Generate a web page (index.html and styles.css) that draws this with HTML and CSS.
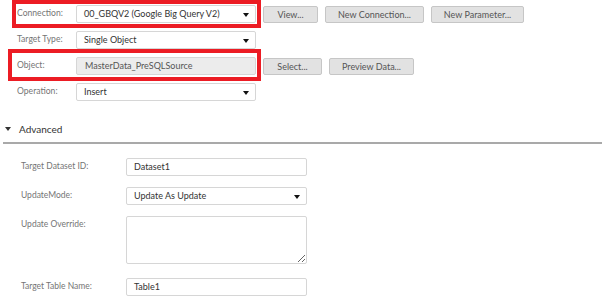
FILE: index.html
```html
<!DOCTYPE html>
<html>
<head>
<meta charset="utf-8">
<link rel="stylesheet" href="styles.css">
</head>
<body>
<div class="page">
  <div class="main">
    <div class="row">
      <span class="lbl">Connection:</span>
      <div class="field sel">00_GBQV2 (Google Big Query V2)<span class="caret"></span></div>
      <div class="btns">
        <span class="btn w-view">View...</span>
        <span class="btn w-newconn">New Connection...</span>
        <span class="btn w-newparam">New Parameter...</span>
      </div>
    </div>
    <div class="row">
      <span class="lbl">Target Type:</span>
      <div class="field sel">Single Object<span class="caret"></span></div>
    </div>
    <div class="row">
      <span class="lbl">Object:</span>
      <div class="field ro">MasterData_PreSQLSource</div>
      <div class="btns">
        <span class="btn w-select">Select...</span>
        <span class="btn w-preview">Preview Data...</span>
      </div>
    </div>
    <div class="row">
      <span class="lbl">Operation:</span>
      <div class="field sel">Insert<span class="caret"></span></div>
    </div>
  </div>

  <div class="adv-head"><span class="tri"></span><span class="adv-title">Advanced</span></div>
  <div class="rule"></div>

  <div class="adv">
    <div class="arow">
      <span class="albl">Target Dataset ID:</span>
      <div class="afield">Dataset1</div>
    </div>
    <div class="arow">
      <span class="albl">UpdateMode:</span>
      <div class="afield sel">Update As Update<span class="caret"></span></div>
    </div>
    <div class="arow">
      <span class="albl">Update Override:</span>
      <textarea class="area"></textarea>
    </div>
    <div class="arow last">
      <span class="albl">Target Table Name:</span>
      <div class="afield">Table1</div>
    </div>
  </div>

  <div class="hl hl-conn"></div>
  <div class="hl hl-obj"></div>
</div>
</body>
</html>
```

FILE: styles.css
```css
* { box-sizing: border-box; }
html, body { margin: 0; padding: 0; background: #fff; }
body {
  font-family: Lato, "Open Sans", "Liberation Sans", sans-serif;
  font-size: 9px;
  color: #333;
  width: 602px;
  height: 300px;
  overflow: hidden;
}
.page { position: relative; width: 602px; height: 300px; }

.main { padding-top: 5px; display: flex; flex-direction: column; gap: 8px; }
.row { display: flex; align-items: flex-start; height: 18px; }
.lbl {
  width: 76px;
  padding-left: 17px;
  color: #757575;
  font-size: 8.6px;
  line-height: 12px;
  padding-top: 2px;
}
.field {
  position: relative;
  width: 180px;
  height: 18px;
  border: 1px solid #d6d6d6;
  border-radius: 2px;
  padding-left: 7px;
  line-height: 16px;
  color: #333;
  background: #fff;
}
.field.ro { background: #ececec; color: #555; padding-left: 8px; }
.caret {
  position: absolute;
  right: 6px;
  top: 7px;
  width: 0; height: 0;
  border-left: 3.5px solid transparent;
  border-right: 3.5px solid transparent;
  border-top: 4px solid #111;
}
.btns { display: flex; gap: 7px; margin-left: 7px; margin-top: 1px; }
.btn {
  height: 17px;
  line-height: 15px;
  border: 1px solid #c6c6c6;
  border-radius: 2px;
  background-color: #e2e2e2;
  background-image: radial-gradient(#cfcfcf 0.6px, transparent 0.7px);
  background-size: 4px 4px;
  color: #555;
  text-align: center;
}
.w-view { width: 55px; }
.w-newconn { width: 99px; }
.w-newparam { width: 93px; }
.w-select { width: 59px; }
.w-preview { width: 85px; }

.adv-head {
  margin-top: 18px;
  height: 20px;
  display: flex;
  align-items: center;
  padding-left: 5px;
}
.tri {
  width: 0; height: 0;
  border-left: 3px solid transparent;
  border-right: 3px solid transparent;
  border-top: 4px solid #333;
  margin-right: 8px;
}
.adv-title { font-size: 10px; color: #333; }
.rule { margin: 3px 0 0 3px; height: 2px; background: #a9a9a9; }

.adv { padding-top: 14px; display: flex; flex-direction: column; gap: 11px; }
.arow { display: flex; align-items: flex-start; }
.arow.last { margin-top: 3px; }
.albl {
  width: 126px;
  padding-left: 21px;
  color: #757575;
  font-size: 8.5px;
  line-height: 12px;
  padding-top: 2px;
}
.afield {
  position: relative;
  width: 181px;
  height: 18px;
  border: 1px solid #d6d6d6;
  border-radius: 2px;
  padding-left: 7px;
  line-height: 16px;
  color: #333;
}
.area {
  width: 181px;
  height: 48px;
  margin: 0;
  border: 1px solid #d6d6d6;
  border-radius: 2px;
  resize: both;
  font: inherit;
}

.hl {
  position: absolute;
  border: 4px solid #ec1c24;
}
.hl-conn { left: 12px; top: 0; width: 249px; height: 28px; }
.hl-obj { left: 8px; top: 49px; width: 253px; height: 32px; }
```
